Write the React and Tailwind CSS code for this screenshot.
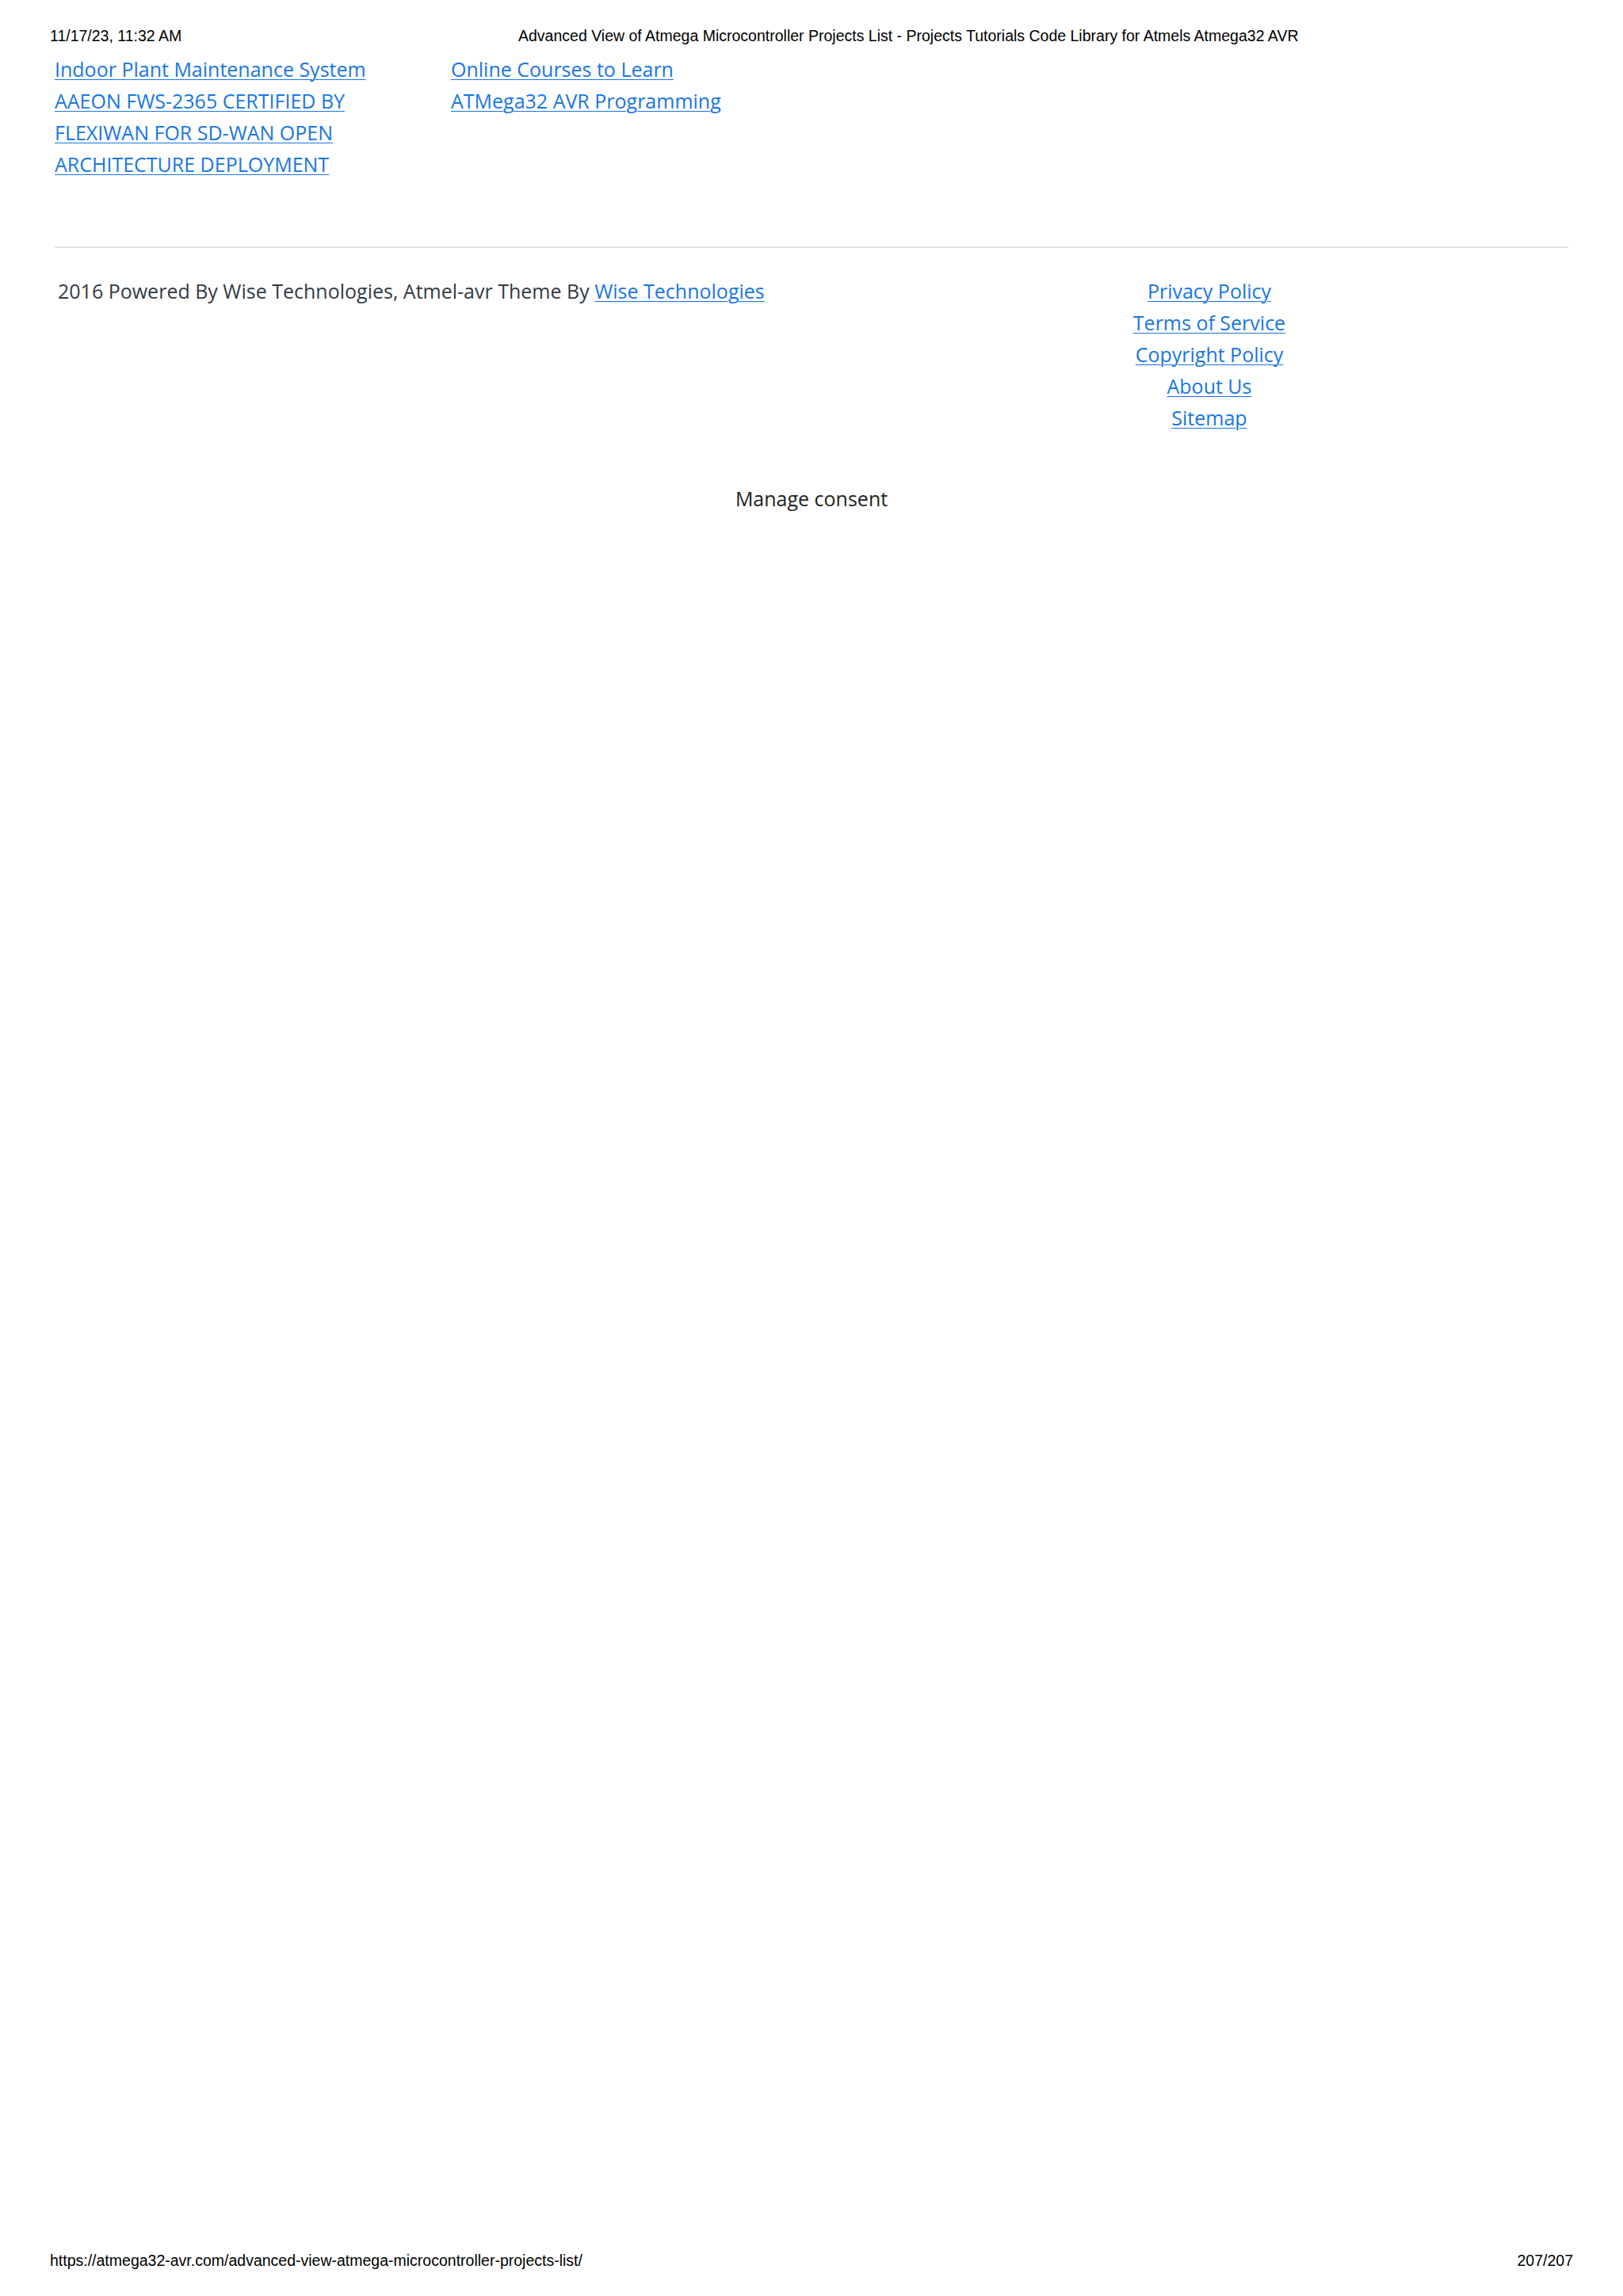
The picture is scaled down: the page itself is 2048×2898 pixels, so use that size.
import React from 'react';

const links = {
    left: [
        { href: '#', lines: ['Indoor Plant Maintenance System'] },
        { href: '#', lines: ['AAEON FWS-2365 CERTIFIED BY', 'FLEXIWAN FOR SD-WAN OPEN', 'ARCHITECTURE DEPLOYMENT'] },
    ],
    right: [
        { href: '#', lines: ['Online Courses to Learn', 'ATMega32 AVR Programming'] },
    ],
};

const footerLinks = ['Privacy Policy', 'Terms of Service', 'Copyright Policy', 'About Us', 'Sitemap'];

const LinkBlock = ({ item }) => (
    <a href={item.href} className="block text-[#1976e0] underline decoration-1 underline-offset-[3px]">
        {item.lines.map((line, i) => (
            <span key={i} className="block">{line}</span>
        ))}
    </a>
);

const App = () => {
    return (
        <div className="min-h-[2898px] bg-white flex flex-col">
            {/* print header */}
            <div className="grid grid-cols-[591px_1fr] px-[63px] pt-[33px] text-[19.5px] leading-[24px] text-black font-['Liberation_Sans',Arial,sans-serif]">
                <span>11/17/23, 11:32 AM</span>
                <span>Advanced View of Atmega Microcontroller Projects List - Projects Tutorials Code Library for Atmels Atmega32 AVR</span>
            </div>

            <main className="mx-[69px] mt-[10px] font-['Open_Sans',sans-serif] text-[25px] leading-[40px]">
                <div className="grid grid-cols-[500px_1fr]">
                    <div>
                        {links.left.map((item, i) => <LinkBlock key={i} item={item} />)}
                    </div>
                    <div>
                        {links.right.map((item, i) => <LinkBlock key={i} item={item} />)}
                    </div>
                </div>

                <hr className="mt-[84px] border-0 border-t-2 border-[#e3e3e3]" />

                <div className="grid grid-cols-[1004px_1fr] mt-[34px]">
                    <p className="pl-1 text-[#333a45]">
                        2016 Powered By Wise Technologies, Atmel-avr Theme By{' '}
                        <a href="#" className="text-[#1976e0] underline decoration-1 underline-offset-[3px]">Wise Technologies</a>
                    </p>
                    <ul className="flex flex-col items-center">
                        {footerLinks.map((l) => (
                            <li key={l}>
                                <a href="#" className="text-[#1976e0] underline decoration-1 underline-offset-[3px]">{l}</a>
                            </li>
                        ))}
                    </ul>
                </div>

                <div className="mt-[62px] text-center text-[#222222]">Manage consent</div>
            </main>

            {/* print footer */}
            <div className="mt-auto flex justify-between pl-[63px] pr-[63px] pb-[33px] text-[19.5px] leading-[24px] text-black font-['Liberation_Sans',Arial,sans-serif]">
                <span>https://atmega32-avr.com/advanced-view-atmega-microcontroller-projects-list/</span>
                <span>207/207</span>
            </div>
        </div>
    );
};

export default App;
